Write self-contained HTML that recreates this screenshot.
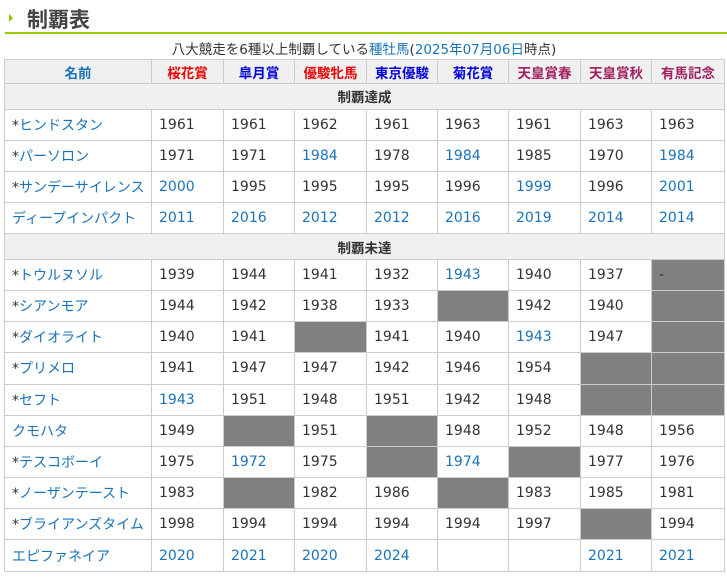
<!DOCTYPE html>
<html><head><meta charset="utf-8"><style>
body{margin:0;background:#fff;font-family:"DejaVu Sans","Noto Sans CJK JP",sans-serif;color:#333;width:727px;height:583px;overflow:hidden;position:relative}
.h{position:absolute;left:27px;top:4px;font-size:21px;font-weight:bold;color:#444;font-family:"Noto Sans CJK JP",sans-serif}
.arr{position:absolute;left:9px;top:14px;width:0;height:0;border-left:4px solid #8c0;border-top:4px solid transparent;border-bottom:4px solid transparent}
.line{position:absolute;left:5px;right:0;top:32px;height:2px;background:#9c0}
.cap{position:absolute;left:4px;width:720px;top:38px;text-align:center;font-size:13.5px}
a{color:#1a73b8;text-decoration:none}
table{position:absolute;left:4px;top:59px;border-collapse:collapse;table-layout:fixed;width:720px}
td,th{border:1px solid #ccc;font-size:14px;padding:0 0 0 7px;height:30.2px;text-align:left;white-space:nowrap;overflow:hidden}
th{background:#f0f0f0;height:23px;text-align:center;padding:0;font-size:13.5px}
tr.s td{background:#f0f0f0;height:24.5px;text-align:center;font-weight:bold;padding:0;font-size:13.5px}
.g{background:#808080}
.r{color:#e00}.b{color:#00d}.p{color:#a02060}.n{color:#1a73b8}
</style></head><body>
<div class="arr"></div><div class="h">制覇表</div><div class="line"></div>
<div class="cap">八大競走を6種以上制覇している<a>種牡馬</a>(<a>2025年07月06日</a>時点)</div>
<table>
<colgroup><col style="width:147px"><col style="width:72px"><col style="width:71px"><col style="width:72px"><col style="width:71px"><col style="width:71px"><col style="width:72px"><col style="width:71px"><col style="width:73px"></colgroup>
<tr><th class="n">名前</th><th class="r">桜花賞</th><th class="b">皐月賞</th><th class="r">優駿牝馬</th><th class="b">東京優駿</th><th class="b">菊花賞</th><th class="p">天皇賞春</th><th class="p">天皇賞秋</th><th class="p">有馬記念</th></tr>
<tr class="s"><td colspan="9">制覇達成</td></tr>
<tr><td>*<a>ヒンドスタン</a></td><td>1961</td><td>1961</td><td>1962</td><td>1961</td><td>1963</td><td>1961</td><td>1963</td><td>1963</td></tr>
<tr><td>*<a>パーソロン</a></td><td>1971</td><td>1971</td><td><a>1984</a></td><td>1978</td><td><a>1984</a></td><td>1985</td><td>1970</td><td><a>1984</a></td></tr>
<tr><td>*<a>サンデーサイレンス</a></td><td><a>2000</a></td><td>1995</td><td>1995</td><td>1995</td><td>1996</td><td><a>1999</a></td><td>1996</td><td><a>2001</a></td></tr>
<tr><td><a>ディープインパクト</a></td><td><a>2011</a></td><td><a>2016</a></td><td><a>2012</a></td><td><a>2012</a></td><td><a>2016</a></td><td><a>2019</a></td><td><a>2014</a></td><td><a>2014</a></td></tr>
<tr class="s"><td colspan="9">制覇未達</td></tr>
<tr><td>*<a>トウルヌソル</a></td><td>1939</td><td>1944</td><td>1941</td><td>1932</td><td><a>1943</a></td><td>1940</td><td>1937</td><td class="g">-</td></tr>
<tr><td>*<a>シアンモア</a></td><td>1944</td><td>1942</td><td>1938</td><td>1933</td><td class="g"></td><td>1942</td><td>1940</td><td class="g"></td></tr>
<tr><td>*<a>ダイオライト</a></td><td>1940</td><td>1941</td><td class="g"></td><td>1941</td><td>1940</td><td><a>1943</a></td><td>1947</td><td class="g"></td></tr>
<tr><td>*<a>プリメロ</a></td><td>1941</td><td>1947</td><td>1947</td><td>1942</td><td>1946</td><td>1954</td><td class="g"></td><td class="g"></td></tr>
<tr><td>*<a>セフト</a></td><td><a>1943</a></td><td>1951</td><td>1948</td><td>1951</td><td>1942</td><td>1948</td><td class="g"></td><td class="g"></td></tr>
<tr><td><a>クモハタ</a></td><td>1949</td><td class="g"></td><td>1951</td><td class="g"></td><td>1948</td><td>1952</td><td>1948</td><td>1956</td></tr>
<tr><td>*<a>テスコボーイ</a></td><td>1975</td><td><a>1972</a></td><td>1975</td><td class="g"></td><td><a>1974</a></td><td class="g"></td><td>1977</td><td>1976</td></tr>
<tr><td>*<a>ノーザンテースト</a></td><td>1983</td><td class="g"></td><td>1982</td><td>1986</td><td class="g"></td><td>1983</td><td>1985</td><td>1981</td></tr>
<tr><td>*<a>ブライアンズタイム</a></td><td>1998</td><td>1994</td><td>1994</td><td>1994</td><td>1994</td><td>1997</td><td class="g"></td><td>1994</td></tr>
<tr><td><a>エピファネイア</a></td><td><a>2020</a></td><td><a>2021</a></td><td><a>2020</a></td><td><a>2024</a></td><td></td><td></td><td><a>2021</a></td><td><a>2021</a></td></tr>
</table>
</body></html>
